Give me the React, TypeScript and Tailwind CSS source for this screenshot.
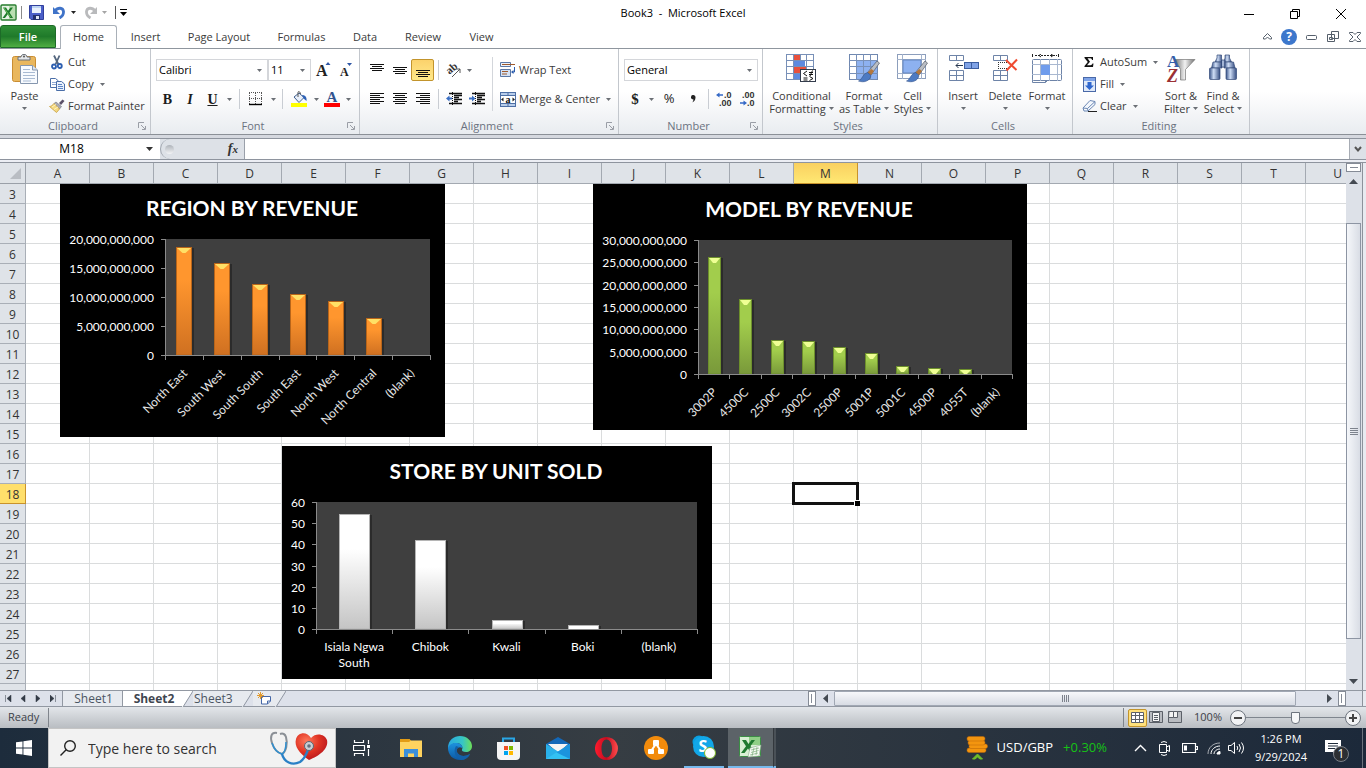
import React from "react";

type Kids = { children?: React.ReactNode };

const columns = "ABCDEFGHIJKLMNOPQRSTU".split("");
const lastFullRow = 27;
const rowNumbers = Array.from({ length: 26 }, (_, i) => i + 3);

/* ---------- small building blocks ---------- */

function Caret({ className = "text-[#6b6f75]" }: { className?: string }) {
  return (
    <svg width="5" height="3" viewBox="0 0 5 3" className={`shrink-0 ${className}`} aria-hidden="true">
      <path d="M0 0H5L2.5 3Z" fill="currentColor" />
    </svg>
  );
}

function Tool({ label, className, children }: Kids & { label: string; className: string }) {
  return (
    <button type="button" aria-label={label} className={`flex h-[22px] shrink-0 items-center justify-center ${className}`}>
      {children}
    </button>
  );
}

function Sep({ className }: { className: string }) {
  return (
    <div className={`flex shrink-0 justify-center ${className}`}>
      <div className="h-5 w-px bg-[#c9cdd3]" />
    </div>
  );
}

function Group({ title, width, launcher, children }: Kids & { title: string; width: string; launcher?: boolean }) {
  return (
    <section aria-label={title} className={`flex h-[85px] shrink-0 flex-col border-r border-[#c3c7cd] ${width}`}>
      <div className="flex h-[69px]">{children}</div>
      <div className="flex h-4 items-center pr-1">
        <span className="flex-1 pl-2 text-center text-[11px] leading-4 text-[#6b7280]">{title}</span>
        {launcher ? (
          <button type="button" aria-label={`${title} settings`}>
            <svg width="8" height="8" viewBox="0 0 8 8" fill="none" stroke="#9a9ea6">
              <path d="M0.5 6V0.5H6M3 3L7 7M7.5 4V7.5H4" />
            </svg>
          </button>
        ) : (
          <span className="w-2" />
        )}
      </div>
    </section>
  );
}

function BigButton({ icon, lines, width, caretBelow }: { icon: React.ReactNode; lines: string[]; width: string; caretBelow?: boolean }) {
  return (
    <button type="button" className={`flex h-[69px] shrink-0 flex-col items-center pt-[5px] ${width}`}>
      <span className="flex h-[35px] items-start justify-center">{icon}</span>
      {lines.map((line, i) => (
        <span key={line} className="flex h-[13px] items-center gap-[3px] text-[11px] leading-[13px] whitespace-nowrap">
          {line}
          {!caretBelow && i === lines.length - 1 && <Caret />}
        </span>
      ))}
      {caretBelow && (
        <span className="flex h-[13px] items-center">
          <Caret />
        </span>
      )}
    </button>
  );
}

function SmallButton({ icon, text, caret }: { icon: React.ReactNode; text: string; caret?: boolean }) {
  return (
    <button type="button" className="flex h-[22px] items-center gap-[3px] text-[11px] whitespace-nowrap">
      <span className="flex w-4 justify-center">{icon}</span>
      {text}
      {caret && (
        <span className="pl-[3px]">
          <Caret />
        </span>
      )}
    </button>
  );
}

function Picker({ label, value, width }: { label: string; value: string; width: string }) {
  return (
    <label className={`relative flex h-[22px] shrink-0 items-center border border-[#d4d6da] bg-white ${width}`}>
      <select aria-label={label} defaultValue={value} className="h-full w-full appearance-none pl-[2px] text-[11px] text-black outline-none">
        <option>{value}</option>
      </select>
      <Caret className="pointer-events-none absolute right-[5px] text-[#6b6f75]" />
    </label>
  );
}

/* ---------- icons ---------- */

function Lines({ y, rows }: { y: number; rows: number[][] }) {
  return (
    <svg width="16" height="16" viewBox="0 0 16 16" stroke="#111" aria-hidden="true">
      {rows.map(([a, b], i) => (
        <path key={i} d={`M${a} ${y + i * 2}.5H${b}`} />
      ))}
    </svg>
  );
}

function PageLines({ kind }: { kind: "left" | "center" | "right" }) {
  const short = { left: [1, 11], center: [3, 13], right: [5, 15] }[kind];
  return <Lines y={2} rows={[[1, 15], short, [1, 15], short, [1, 15], short]} />;
}

function Indent({ left }: { left?: boolean }) {
  return (
    <svg width="17" height="14" viewBox="0 0 17 14" aria-hidden="true">
      <path d="M3 1.5H16M8 3.5H16M8 5.5H13M8 7.5H16M8 9.5H12M3 11.5H16" stroke="#111" strokeWidth="1.3" />
      <path d="M6.5 0V13" stroke="#111" strokeDasharray="1 1" />
      <path d={left ? "M0 6.5L3.500 3.500V5.500H6V7.500H3.500V9.500Z" : "M6.500 6.500L3 3.500V5.500H0V7.500H3V9.500Z"} fill="#3a6fc4" />
    </svg>
  );
}

const ExcelLogo = () => (
  <svg width="17" height="17" viewBox="0 0 17 17" aria-hidden="true">
    <rect x="1" y="1" width="15" height="15" rx="1" fill="#e9f4e6" stroke="#267c2c" strokeWidth="1.400" />
    <path d="M9 2H15V15H9Z" fill="#b9dfb1" />
    <path d="M3 3.500H6L8 6.800L10.500 3.500H13L9.500 8.500L13 14H10L7.700 10.300L5 14H2.500L6.300 8.700Z" fill="#1e7b2c" />
    <path d="M4 4L10.500 13" stroke="#6cbc5c" />
  </svg>
);

const SaveIcon = () => (
  <svg width="15" height="15" viewBox="0 0 15 15" aria-hidden="true">
    <path d="M0.500 0.500H14.500V14.500H2L0.500 13Z" fill="#4a5fc8" stroke="#303f9c" />
    <rect x="3" y="1" width="9" height="7" fill="#e8f0fc" />
    <path d="M3 1H12V3H3Z" fill="#bcd3f2" />
    <rect x="4" y="10" width="7" height="5" fill="#22306e" />
    <rect x="7" y="11" width="3" height="3" fill="#dde4f5" />
  </svg>
);

function TurnArrow({ color, flip }: { color: string; flip?: boolean }) {
  return (
    <svg width="14" height="13" viewBox="0 0 14 13" aria-hidden="true">
      <g transform={flip ? "translate(14 0) scale(-1 1)" : undefined}>
        <path d="M3 5C6 1 11 1.500 11.500 5.500C11.700 8.500 10 10.500 7.500 12" fill="none" stroke={color} strokeWidth="2.800" />
        <path d="M1 1V8H8Z" fill={color} />
      </g>
    </svg>
  );
}

const PasteIcon = () => (
  <svg width="28" height="31" viewBox="0 0 28 31" aria-hidden="true">
    <rect x="1.500" y="2.500" width="23" height="25" rx="2" fill="#e9b75e" stroke="#c98d33" />
    <path d="M7 6V3H10C10-0.500 16-0.500 16 3H19V6Z" fill="#e4e7ea" stroke="#6b7178" />
    <circle cx="13" cy="2.500" r="1" fill="#555" />
    <path d="M9.500 11.500H21.500L26.500 16V29.500H9.500Z" fill="#f8fbff" stroke="#8596ae" />
    <path d="M21.500 11.500V16H26.500" fill="#dbe5f2" stroke="#8596ae" />
    <path d="M12 15.500H19M12 18.500H24M12 21.500H24M12 24.500H24M12 27H20" stroke="#a9bbd3" />
  </svg>
);

const CutIcon = () => (
  <svg width="12" height="15" viewBox="0 0 12 15" fill="none" aria-hidden="true">
    <path d="M3 0.500L7.500 9.500M8.500 0.500L4.500 9.500" stroke="#55677f" strokeWidth="1.800" />
    <circle cx="3" cy="11.500" r="2" stroke="#2d5fb0" strokeWidth="1.800" />
    <circle cx="8.800" cy="11" r="2" stroke="#2d5fb0" strokeWidth="1.800" />
  </svg>
);

const CopyIcon = () => (
  <svg width="15" height="13" viewBox="0 0 15 13" fill="#fff" stroke="#4a6ea8" aria-hidden="true">
    <path d="M0.500 0.500H5.500L8.500 3V9.500H0.500Z" />
    <path d="M2 4.500H6M2 6.500H6" stroke="#8fa9d4" />
    <path d="M6.500 3.500H11.500L14.500 6V12.500H6.500Z" fill="#eaf1fc" />
    <path d="M8 6.500H12M8 8.500H13M8 10.500H13" stroke="#5d85c6" />
  </svg>
);

const PainterIcon = () => (
  <svg width="16" height="14" viewBox="0 0 16 14" aria-hidden="true">
    <path d="M10 4L13.500 0.500L15.500 2L12 6Z" fill="#5b5068" />
    <path d="M7 3L12.500 7.500L10.500 10L5 4.500Z" fill="#a7a9b4" stroke="#70727d" strokeWidth="0.600" />
    <path d="M5 4.500L10.500 10L7.500 13.500L0.500 7.500C2 7.500 4 6 5 4.500Z" fill="#f4d982" stroke="#c79e3d" strokeWidth="0.800" />
    <path d="M3 8L7 5.500M5 10.500L9 8" stroke="#fff3bd" />
  </svg>
);

const BordersIcon = () => (
  <svg width="14" height="14" viewBox="0 0 14 14" stroke="#555" aria-hidden="true">
    <path d="M0.500 1V12M6.500 1V12M12.500 1V12M0 0.500H13M0 6.500H13" strokeDasharray="1 1" />
    <path d="M0 12.500H13" stroke="#000" strokeWidth="1.400" />
  </svg>
);

const FillColorIcon = () => (
  <svg width="17" height="17" viewBox="0 0 17 17" aria-hidden="true">
    <path d="M3 6L8 2L13 6.500L8 11.500Z" fill="#e8effa" stroke="#41608f" />
    <path d="M7 6V1.500C7 0 9 0 9.500 3" fill="none" stroke="#555" />
    <path d="M11 4C14 4 16 6 15.500 10L12.500 7.500Z" fill="#2e62b6" />
    <rect x="0" y="12" width="16" height="4" fill="#ffff00" />
  </svg>
);

const OrientationIcon = () => (
  <svg width="16" height="16" viewBox="0 0 16 16" className="overflow-visible" aria-hidden="true">
    <text x="1" y="10" transform="rotate(-42 6 8)" fontSize="11" fontWeight="bold" fontFamily="Liberation Serif" fill="#333">ab</text>
    <path d="M6 15L14 7M14 11V7H10" fill="none" stroke="#555" />
  </svg>
);

const WrapIcon = () => (
  <svg width="16" height="16" viewBox="0 0 16 16" fill="none" aria-hidden="true">
    <path d="M0.500 0.500H10.500V4.500H0.500Z" fill="#edf3fb" stroke="#5b78a6" />
    <path d="M2 2.500H15" stroke="#a05a2c" />
    <path d="M0.500 7.500H10.500V14.500H0.500Z" fill="#d5e2f4" stroke="#5b78a6" />
    <path d="M2 9.500H8M2 12H7" stroke="#a05a2c" />
    <path d="M14.500 5V10H12" stroke="#2a5cae" />
    <path d="M11 10L13.500 8V12Z" fill="#2a5cae" />
  </svg>
);

const MergeIcon = () => (
  <svg width="16" height="15" viewBox="0 0 16 15" aria-hidden="true">
    <rect x="0.500" y="0.500" width="15" height="14" fill="#b8cdea" stroke="#4d6fa5" />
    <path d="M0 3.500H16M0 11.500H16M8 0V4M8 11V15" stroke="#4d6fa5" />
    <rect x="1" y="4" width="14" height="7" fill="#fff" />
    <path d="M1 7.500L3.500 5.500V9.500ZM15 7.500L12.500 5.500V9.500Z" fill="#222" />
    <text x="5.500" y="10.500" fontSize="10" fontWeight="bold" fontFamily="Liberation Serif" fill="#111">a</text>
  </svg>
);

function DecimalIcon({ more }: { more?: boolean }) {
  return (
    <svg width="17" height="15" viewBox="0 0 17 15" fontSize="9" fontWeight="bold" fontFamily="Liberation Sans" fill="#333" className="overflow-visible" aria-hidden="true">
      <text x={more ? 8 : 3} y="6">{more ? ".0" : ".00"}</text>
      <text x={more ? 3 : 8} y="14">{more ? ".00" : ".0"}</text>
      <path d={more ? "M0 3L3.500 0.500V2.200H7V3.800H3.500V5.500Z" : "M8 11L4.500 8.500V10.200H1V11.800H4.500V13.500Z"} fill="#3468c6" />
    </svg>
  );
}

const ConditionalIcon = () => (
  <svg width="31" height="29" viewBox="0 0 31 29" aria-hidden="true">
    <rect x="0.500" y="0.500" width="27" height="25" fill="#fff" stroke="#7890b8" />
    <rect x="8" y="1" width="6" height="6" fill="#e8503c" />
    <rect x="8" y="7" width="11" height="6" fill="#5e8ae0" />
    <rect x="8" y="13" width="12" height="6" fill="#e8503c" />
    <rect x="8" y="19" width="7" height="6" fill="#5e8ae0" />
    <path d="M0 6.500H28M0 12.500H28M0 19.500H28M7.500 0V26M14.500 0V7M20.500 0V26" stroke="#7890b8" />
    <rect x="14.500" y="15.500" width="15" height="12" fill="#fff" stroke="#333c4c" />
    <path d="M21 17L17.500 19.500L21 22M17.500 24H21.500M17.500 26H21.500M23 18.500H27M23 20.500H27M26.500 16.500L24 22M23.500 22.500L27 24.500L23.500 26.500" stroke="#111" fill="none" />
  </svg>
);

function Brush() {
  return (
    <g>
      <path d="M28 7L30.500 9L22 21L18.500 18.500Z" fill="#b9bdc4" stroke="#555b66" strokeWidth="0.700" />
      <path d="M22.500 15L25 17L22 21L18.500 18.500Z" fill="#b3763c" />
      <path d="M18.500 18.500L22 21.500C21 27 15 29 9.500 27C13 26 13.500 20 18.500 18.500Z" fill="#4d7ac2" stroke="#33538b" strokeWidth="0.600" />
    </g>
  );
}

const FormatTableIcon = () => (
  <svg width="31" height="29" viewBox="0 0 31 29" aria-hidden="true">
    <rect x="0.500" y="0.500" width="28" height="25" fill="#fff" stroke="#7088b0" />
    <rect x="7" y="7" width="21" height="18" fill="#8db1f0" />
    <path d="M0 6.500H29M0 12.500H29M0 19.500H29M7.500 0V26M14.500 0V26M21.500 0V26" stroke="#7890b8" />
    <Brush />
  </svg>
);

const CellStylesIcon = () => (
  <svg width="31" height="29" viewBox="0 0 31 29" aria-hidden="true">
    <rect x="0.500" y="0.500" width="28" height="24" fill="#fff" stroke="#8c9ebc" />
    <path d="M0 5.500H29M0 19.500H29M5.500 0V25M24.500 0V25" stroke="#a3b2cb" />
    <rect x="6" y="6" width="18" height="13" fill="#8db1f0" stroke="#6585bd" />
    <Brush />
  </svg>
);

const InsertIcon = () => (
  <svg width="31" height="28" viewBox="0 0 31 28" fill="#fff" stroke="#6e84a8" aria-hidden="true">
    <path d="M1.500 1.500H15.500V6.500H1.500ZM8.500 1.500V6.500M1.500 16.500H15.500V26.500H1.500ZM8.500 16.500V26.500M1.500 21.500H15.500" />
    <rect x="16.500" y="8.500" width="14" height="6" fill="#7fa2e6" stroke="#3a5da0" />
    <path d="M23.500 8V15" stroke="#3a5da0" />
    <path d="M8 11.500H15M10.500 9L8 11.500L10.500 14" fill="none" stroke="#26364f" />
  </svg>
);

const DeleteIcon = () => (
  <svg width="27" height="28" viewBox="0 0 27 28" fill="#fff" stroke="#6e84a8" aria-hidden="true">
    <path d="M1.500 1.500H15.500V6.500H1.500ZM8.500 1.500V6.500M1.500 16.500H15.500V26.500H1.500ZM8.500 16.500V26.500M1.500 21.500H15.500" />
    <path d="M6.500 8V14M6 8.500H16M6 14.500H16" stroke="#333" strokeDasharray="1 1" />
    <path d="M14 6L24.500 16M25 5.500L14.500 16.500" stroke="#ef4a30" strokeWidth="2" />
  </svg>
);

const FormatIcon = () => (
  <svg width="32" height="30" viewBox="0 0 32 30" fill="#fff" stroke="#6e84a8" aria-hidden="true">
    <path d="M4 1.500H26" stroke="#222" strokeDasharray="2 1" />
    <path d="M1.500 0V3M27.500 0V3M10 0L8 1.500L10 3M20 0L22 1.500L20 3" stroke="#222" fill="none" />
    <path d="M1.500 25V28.500H14.500V25M14.500 28.500L17 26" />
    <rect x="1.500" y="5.500" width="29" height="21" rx="1" />
    <path d="M1 10.500H31M1 20.500H31M9.500 5V27M18.500 5V27M26.500 5V27" stroke="#a9b8d0" />
    <rect x="10" y="11" width="9" height="10" fill="#6f9cec" stroke="none" />
  </svg>
);

const SortIcon = () => (
  <svg width="30" height="30" viewBox="0 0 30 30" fontFamily="Liberation Serif" fontWeight="bold" className="overflow-visible" aria-hidden="true">
    <defs>
      <linearGradient id="funnel">
        <stop offset="0" stopColor="#747474" />
        <stop offset="0.500" stopColor="#f2f2f2" />
        <stop offset="1" stopColor="#6e6e6e" />
      </linearGradient>
    </defs>
    <path d="M9 5.500H29L19.500 15.500V26H14.500V15.500Z" fill="url(#funnel)" stroke="#777" strokeWidth="0.700" />
    <text x="1" y="13" fontSize="17" fill="#355ea9">A</text>
    <text x="1" y="28" fontSize="18" fontStyle="italic" fill="#9b3034">Z</text>
  </svg>
);

const FindIcon = () => (
  <svg width="28" height="27" viewBox="0 0 28 27" aria-hidden="true">
    <defs>
      <linearGradient id="lens">
        <stop offset="0" stopColor="#3a5488" />
        <stop offset="0.400" stopColor="#cfdef6" />
        <stop offset="1" stopColor="#344c80" />
      </linearGradient>
    </defs>
    <g fill="url(#lens)" stroke="#334a7a" strokeWidth="0.700">
      <path d="M8 4V1H12.500V4L13 8H6Z" />
      <path d="M16 4V1H20.500V4L22.500 8H15Z" />
      <path d="M4 8H13V14H2.500Z" />
      <path d="M15 8H24.500L26 14H15Z" />
      <path d="M12.500 6H16V13H12.500Z" />
      <rect x="0.500" y="14" width="10.500" height="11.500" rx="1" />
      <rect x="17" y="14" width="10.500" height="11.500" rx="1" />
    </g>
  </svg>
);

const FillIcon = () => (
  <svg width="13" height="15" viewBox="0 0 13 15" aria-hidden="true">
    <rect x="0.500" y="0.500" width="12" height="14" fill="#dfe9f9" stroke="#4a69a8" />
    <path d="M1 1H12V4H1Z" fill="#7ea3e8" />
    <path d="M4.500 5H8.500V8.500H11L6.500 13L2 8.500H4.500Z" fill="#2f67cf" />
  </svg>
);

const ClearIcon = () => (
  <svg width="15" height="12" viewBox="0 0 15 12" aria-hidden="true">
    <path d="M8 0.500L13 1.500V4.500L6 11H2L1 8Z" fill="#f3f7fc" stroke="#6b87b4" />
    <path d="M1 8L5.500 8.500L13 1.500M5.500 8.500L6 11" fill="none" stroke="#6b87b4" />
    <path d="M6 11.500H15" stroke="#222" />
  </svg>
);

/* ---------- title bar, tabs, ribbon ---------- */

function TitleBar() {
  return (
    <div className="grid h-6 grid-cols-[1fr_auto_1fr] items-center bg-white">
      <div className="flex items-center">
        <ExcelLogo />
        <div className="ml-1 h-[13px] w-px bg-[#8a8a8a]" />
        <button type="button" aria-label="Save" className="ml-[7px]"><SaveIcon /></button>
        <button type="button" aria-label="Undo" className="ml-2"><TurnArrow color="#3f73c8" /></button>
        <button type="button" aria-label="Undo history" className="ml-[5px]"><Caret className="text-[#222]" /></button>
        <button type="button" aria-label="Redo" className="ml-2"><TurnArrow color="#b9babc" flip /></button>
        <button type="button" aria-label="Redo history" className="ml-1"><Caret className="text-[#a5a5a5]" /></button>
        <div className="ml-2 h-[13px] w-px bg-[#555]" />
        <button type="button" aria-label="Customize toolbar" className="ml-1 flex flex-col items-center gap-[2px]">
          <span className="h-px w-[7px] bg-black" />
          <svg width="7" height="4" viewBox="0 0 7 4"><path d="M0 0H7L3.500 4Z" /></svg>
        </button>
      </div>
      <h1 className="pt-[2px] text-[11px] whitespace-pre text-black">Book3  -  Microsoft Excel</h1>
      <div className="flex justify-end pt-1 pr-[2px]">
        <button type="button" aria-label="Minimize" className="flex w-[46px] justify-center">
          <svg width="10" height="10" stroke="#000"><path d="M0 5.500H10" /></svg>
        </button>
        <button type="button" aria-label="Restore" className="flex w-[46px] justify-center">
          <svg width="10" height="10" stroke="#000" fill="none"><path d="M0.500 2.500H7.500V9.500H0.500ZM2.500 2.500V0.500H9.500V7.500H7.500" /></svg>
        </button>
        <button type="button" aria-label="Close" className="flex w-[46px] justify-center">
          <svg width="10" height="10" stroke="#000"><path d="M0 0L10 10M10 0L0 10" /></svg>
        </button>
      </div>
    </div>
  );
}

function RibbonTabs() {
  const tabs: [string, string][] = [
    ["Insert", "w-[57px]"],
    ["Page Layout", "w-[90px]"],
    ["Formulas", "w-[75px]"],
    ["Data", "w-[52px]"],
    ["Review", "w-16"],
    ["View", "w-[53px]"],
  ];
  return (
    <nav className="flex h-[25px] items-stretch border-b border-[#8f969e] pt-px text-[11px]">
      <button type="button" className="w-14 rounded-t-[3px] border border-[#1d6b28] bg-linear-to-b from-[#2f8f37] via-[#1f7a2a] to-[#4fae43] pt-px font-semibold text-white">File</button>
      <button type="button" className="-mb-px ml-1 w-[57px] rounded-t-[3px] border border-b-0 border-[#a9b0b8] bg-white">Home</button>
      {tabs.map(([name, width]) => (
        <button type="button" key={name} className={`pt-[2px] ${width}`}>{name}</button>
      ))}
      <div className="ml-auto flex items-center">
        <button type="button" aria-label="Collapse ribbon" className="flex w-[22px] justify-center">
          <svg width="9" height="7" fill="none" stroke="#555f6b"><path d="M0.500 4.500L4.500 0.500L8.500 4.500V6H6.500L4.500 4L2.500 6H0.500Z" /></svg>
        </button>
        <button type="button" aria-label="Help" className="flex w-[22px] justify-center">
          <span className="flex size-4 items-center justify-center rounded-full bg-[#3c77cc] text-[12px] font-bold text-white">?</span>
        </button>
        <button type="button" aria-label="Minimize workbook" className="flex w-[22px] justify-center">
          <svg width="11" height="9" fill="#fff" stroke="#555f6b"><rect x="0.500" y="3.500" width="10" height="4" rx="1" /></svg>
        </button>
        <button type="button" aria-label="Restore workbook" className="flex w-[22px] justify-center">
          <svg width="12" height="11" fill="#fff" stroke="#555f6b"><path d="M4.500 0.500H11.500V7.500H4.500ZM0.500 3.500H7.500V10.500H0.500ZM2.500 6.500H5.500V8.500H2.500Z" /></svg>
        </button>
        <button type="button" aria-label="Close workbook" className="flex w-[22px] justify-center">
          <svg width="12" height="10" fill="none" stroke="#555f6b"><path d="M0.500 0.500H4L6 2.500L8 0.500H11.500V1.500L8 5L11.500 8.500V9.500H8L6 7.500L4 9.500H0.500V8.500L4 5L0.500 1.500Z" /></svg>
        </button>
      </div>
    </nav>
  );
}

function Ribbon() {
  return (
    <div className="flex h-[86px] overflow-hidden border-b border-[#8b9097] bg-linear-to-b from-white from-50% to-[#e9ecf0]">
      <Group title="Clipboard" width="w-[151px]" launcher>
        <BigButton icon={<PasteIcon />} lines={["Paste"]} width="w-[49px]" caretBelow />
        <div className="flex flex-col pt-[2px]">
          <SmallButton icon={<CutIcon />} text="Cut" />
          <SmallButton icon={<CopyIcon />} text="Copy" caret />
          <SmallButton icon={<PainterIcon />} text="Format Painter" />
        </div>
      </Group>

      <Group title="Font" width="w-[209px]" launcher>
        <div className="flex flex-col gap-[7px] pt-[10px] pl-[5px]">
          <div className="flex">
            <Picker label="Font" value="Calibri" width="w-[112px]" />
            <Picker label="Font size" value="11" width="w-[43px]" />
            <Tool label="Grow font" className="w-[25px]">
              <svg width="15" height="16" viewBox="0 0 15 16" fontFamily="Liberation Serif" fontWeight="bold" className="overflow-visible">
                <text x="0" y="14" fontSize="16" fill="#222">A</text><path d="M9.500 3H14.500L12 0Z" fill="#2e56a5" />
              </svg>
            </Tool>
            <Tool label="Shrink font" className="w-[20px]">
              <svg width="14" height="16" viewBox="0 0 14 16" fontFamily="Liberation Serif" fontWeight="bold" className="overflow-visible">
                <text x="1" y="14" fontSize="12" fill="#222">A</text><path d="M8 1H13L10.500 4Z" fill="#2e56a5" />
              </svg>
            </Tool>
          </div>
          <div className="flex items-center font-['Liberation_Serif',serif] text-[14px] font-bold text-[#1c1c1c]">
            <Tool label="Bold" className="w-[23px]">B</Tool>
            <Tool label="Italic" className="w-[22px] italic">I</Tool>
            <Tool label="Underline" className="w-[23px] underline">U</Tool>
            <Tool label="Underline style" className="w-[11px]"><Caret /></Tool>
            <Sep className="w-[9px]" />
            <Tool label="Borders" className="w-6"><BordersIcon /></Tool>
            <Tool label="Border style" className="w-[10px]"><Caret /></Tool>
            <Sep className="w-[9px]" />
            <Tool label="Fill color" className="w-6"><FillColorIcon /></Tool>
            <Tool label="Fill palette" className="w-[10px]"><Caret /></Tool>
            <Tool label="Font color" className="w-[22px]">
              <svg width="16" height="17" viewBox="0 0 16 17" className="overflow-visible"><text x="2.500" y="11" fontSize="15" fill="#31538f">A</text><rect y="12" width="16" height="4" fill="#fe0000" /></svg>
            </Tool>
            <Tool label="Font palette" className="w-[10px]"><Caret /></Tool>
          </div>
        </div>
      </Group>

      <Group title="Alignment" width="w-[259px]" launcher>
        <div className="flex w-[132px] flex-col gap-[7px] pt-[10px] pl-[5px]">
          <div className="flex items-center">
            <Tool label="Top align" className="w-[23px]"><Lines y={2} rows={[[1, 15], [3, 13], [1, 15], [3, 13]]} /></Tool>
            <Tool label="Middle align" className="w-[23px]"><Lines y={5} rows={[[1, 15], [3, 13], [1, 15], [3, 13]]} /></Tool>
            <Tool label="Bottom align" className="w-[23px] rounded-[2px] border border-[#c2942c] bg-linear-to-b from-[#fbd26c] to-[#ffe98a]"><Lines y={8} rows={[[1, 15], [3, 13], [1, 15], [3, 13]]} /></Tool>
            <Sep className="w-2" />
            <Tool label="Orientation" className="w-[23px]"><OrientationIcon /></Tool>
            <Tool label="Orientation options" className="w-[9px]"><Caret /></Tool>
          </div>
          <div className="flex items-center">
            <Tool label="Align left" className="w-[23px]"><PageLines kind="left" /></Tool>
            <Tool label="Align center" className="w-[23px]"><PageLines kind="center" /></Tool>
            <Tool label="Align right" className="w-[23px]"><PageLines kind="right" /></Tool>
            <Sep className="w-2" />
            <Tool label="Decrease indent" className="w-6"><Indent left /></Tool>
            <Tool label="Increase indent" className="w-[22px]"><Indent /></Tool>
          </div>
        </div>
        <div className="mt-2 h-[54px] w-px bg-[#d3d6db]" />
        <div className="flex flex-col gap-[7px] pt-[10px] pl-[7px]">
          <SmallButton icon={<WrapIcon />} text="Wrap Text" />
          <SmallButton icon={<MergeIcon />} text="Merge & Center" caret />
        </div>
      </Group>

      <Group title="Number" width="w-[144px]" launcher>
        <div className="flex flex-col gap-[7px] pt-[10px] pl-[5px]">
          <Picker label="Number format" value="General" width="w-[134px]" />
          <div className="flex items-center">
            <Tool label="Currency" className="w-[22px] font-['Liberation_Serif',serif] text-[15px] font-bold text-[#222]">$</Tool>
            <Tool label="Currency options" className="w-[10px]"><Caret /></Tool>
            <Tool label="Percent" className="w-[26px] text-[13px] text-[#222]">%</Tool>
            <Tool label="Comma style" className="w-[22px]">
              <svg width="5" height="8" viewBox="0 0 5 8"><path d="M0 2A2 2 0 0 1 4.500 2.500C4.500 5 3 7 1 7.500C2 6.500 2.500 5 2.300 4.300A2 2 0 0 1 0 2Z" fill="#222" /></svg>
            </Tool>
            <Sep className="w-[9px]" />
            <Tool label="Increase decimal" className="w-[23px]"><DecimalIcon more /></Tool>
            <Tool label="Decrease decimal" className="w-[22px]"><DecimalIcon /></Tool>
          </div>
        </div>
      </Group>

      <Group title="Styles" width="w-[175px]">
        <div className="flex pl-[2px]">
          <BigButton icon={<ConditionalIcon />} lines={["Conditional", "Formatting"]} width="w-[73px]" />
          <BigButton icon={<FormatTableIcon />} lines={["Format", "as Table"]} width="w-[52px]" />
          <BigButton icon={<CellStylesIcon />} lines={["Cell", "Styles"]} width="w-[45px]" />
        </div>
      </Group>

      <Group title="Cells" width="w-[135px]">
        <div className="flex pl-1">
          <BigButton icon={<InsertIcon />} lines={["Insert"]} width="w-[42px]" caretBelow />
          <BigButton icon={<DeleteIcon />} lines={["Delete"]} width="w-[42px]" caretBelow />
          <BigButton icon={<FormatIcon />} lines={["Format"]} width="w-[42px]" caretBelow />
        </div>
      </Group>

      <Group title="Editing" width="w-[177px]">
        <div className="flex w-[87px] flex-col pt-[2px] pl-2">
          <SmallButton
            icon={<svg width="10" height="10" viewBox="0 0 10 10"><path d="M0.500 0H9V3H8C8 1.500 7 1.200 3.500 1.200L6 4.700L3 8.300C7 8.300 8 8.200 8.500 6.500H9.500L9 10H0.500V9L3.800 5L0.500 1Z" fill="#111" /></svg>}
            text="AutoSum"
            caret
          />
          <SmallButton icon={<FillIcon />} text="Fill" caret />
          <SmallButton icon={<ClearIcon />} text="Clear" caret />
        </div>
        <BigButton icon={<SortIcon />} lines={["Sort &", "Filter"]} width="w-[42px]" />
        <BigButton icon={<FindIcon />} lines={["Find &", "Select"]} width="w-[42px]" />
      </Group>
    </div>
  );
}

function FormulaBar() {
  return (
    <div className="flex h-[22px] shrink-0 border-y border-[#8e949e] bg-[#dde1e7]">
      <div className="flex w-40 items-center bg-white pr-1">
        <input aria-label="Name box" defaultValue="M18" className="w-[143px] bg-transparent text-center text-[12px] text-black outline-none" />
        <button type="button" aria-label="Named ranges" className="flex flex-1 justify-center">
          <svg width="7" height="4" viewBox="0 0 7 4"><path d="M0 0H7L3.500 4Z" fill="#333" /></svg>
        </button>
      </div>
      <div className="flex w-[84px] items-center justify-between rounded-l-full border-l border-[#9fa5ae] bg-[#dde1e7] pr-[6px] pl-1">
        <span className="size-[9px] rounded-full bg-linear-to-b from-[#aeb3ba] to-[#f3f4f6]" />
        <button type="button" aria-label="Insert function" className="font-['Liberation_Serif',serif] text-[14px] leading-5 font-bold text-[#333] italic">
          f<span className="text-[11px]">x</span>
        </button>
      </div>
      <input aria-label="Formula" className="min-w-0 flex-1 border-l border-[#9aa0aa] bg-white px-2 outline-none" />
      <button type="button" aria-label="Expand formula bar" className="flex w-[17px] items-center justify-center border-l border-[#a7acb4]">
        <svg width="8" height="7" fill="none" stroke="#555" strokeWidth="2"><path d="M1 1L4 4.500L7 1" /></svg>
      </button>
    </div>
  );
}

/* ---------- charts ---------- */

type ChartProps = {
  id: string;
  title: string;
  titleX: number;
  titleY: number;
  width: number;
  height: number;
  plot: { x: number; y: number; w: number; h: number };
  ticks: string[];
  tickX: number;
  bars: { label: string[]; h: number }[];
  barWidth: number;
  colors: [string, string, string, string];
  slanted?: boolean;
};

function Chart({ id, title, titleX, titleY, width, height, plot, ticks, tickX, bars, barWidth, colors, slanted }: ChartProps) {
  const step = plot.w / bars.length;
  const base = plot.y + plot.h;
  const [edge, top, bottom, shine] = colors;
  return (
    <svg width={width} height={height} viewBox={`0 0 ${width} ${height}`} role="img" aria-label={title} fontFamily="Lato, sans-serif" fontSize="12" fill="#fff" className="block">
      <defs>
        <linearGradient id={`${id}-body`} x2="0" y2="1">
          <stop offset="0" stopColor={top} />
          <stop offset="0.300" stopColor={top} />
          <stop offset="1" stopColor={bottom} />
        </linearGradient>
      </defs>
      <rect width={width} height={height} fill="#000" />
      <text x={titleX} y={titleY} textAnchor="middle" fontSize="21" fontWeight="bold">{title}</text>
      <rect x={plot.x} y={plot.y} width={plot.w} height={plot.h} fill="#3f3f3f" />
      {ticks.map((t, i) => {
        const y = plot.y + (plot.h * i) / (ticks.length - 1);
        return (
          <g key={t}>
            <text x={tickX} y={y + 5} textAnchor="end">{t}</text>
            <path d={`M${plot.x - 4} ${Math.round(y) + 0.5}H${plot.x}`} stroke="#8b8b8b" />
          </g>
        );
      })}
      {bars.map((b, i) => {
        const x = Math.round(plot.x + 0.5 + step * (i + 0.5) - barWidth / 2);
        const y = base - b.h;
        const cx = plot.x + step * (i + 0.5);
        return (
          <g key={b.label.join(" ")}>
            {b.h > 0 && (
              <>
                <rect x={x + 1} y={y + 1} width={barWidth + 1} height={b.h - 1} fill="#2b2b2b" />
                <rect x={x + 0.5} y={y + 0.5} width={barWidth - 1} height={b.h - 0.5} fill={`url(#${id}-body)`} stroke={edge} />
                {slanted ? (
                  <path d={`M${x + 1} ${y + 1}H${x + barWidth - 1}L${x + barWidth / 2 + 1.5} ${y + Math.min(6, b.h)}H${x + barWidth / 2 - 1.5}Z`} fill={shine} />
                ) : (
                  <rect x={x + 1} y={y + 1} width={barWidth - 2} height={Math.min(3, b.h - 1)} fill={shine} />
                )}
              </>
            )}
            {slanted ? (
              <text x={cx + 4} y={base + 19} textAnchor="end" fill="#e6e6e6" transform={`rotate(-45 ${cx + 4} ${base + 19})`}>{b.label[0]}</text>
            ) : (
              b.label.map((line, k) => (
                <text key={line} x={cx} y={base + 22 + k * 16} textAnchor="middle">{line}</text>
              ))
            )}
          </g>
        );
      })}
      <path d={`M${plot.x + 0.5} ${plot.y}V${base + 0.5}H${plot.x + plot.w}`} fill="none" stroke="#8b8b8b" />
      {Array.from({ length: bars.length + 1 }, (_, i) => (
        <path key={i} d={`M${Math.round(plot.x + step * i) + 0.5} ${base}V${base + 5}`} stroke="#8b8b8b" />
      ))}
    </svg>
  );
}

const orange: [string, string, string, string] = ["#b8651a", "#ff962e", "#cf7021", "#ffe066"];
const green: [string, string, string, string] = ["#6d8f2c", "#a2cd4c", "#79993a", "#efff94"];
const white: [string, string, string, string] = ["#b5b5b5", "#ffffff", "#c4c4c4", "#ffffff"];

const one = (pairs: [string, number][]) => pairs.map(([l, h]) => ({ label: l.split("|"), h }));

/* ---------- worksheet ---------- */

function Sheet() {
  return (
    <div className="relative min-h-0 flex-1 overflow-hidden bg-white">
      <table className="w-[1370px] table-fixed border-separate border-spacing-0 text-[#333]">
        <thead>
          <tr className="h-[21px] bg-[#dfe3e8]">
            <th className="w-[26px] border-r border-b border-[#9aa0a8] p-0">
              <svg width="12" height="12" className="ml-auto mr-1"><path d="M12 1V12H1Z" fill="#b9bdc3" /></svg>
            </th>
            {columns.map((c) => (
              <th
                key={c}
                className={
                  c === "M"
                    ? "w-16 border-r border-b border-[#c8922c] bg-linear-to-b from-[#f9d060] to-[#ffe873] p-0 pt-[2px] text-[12px] leading-[18px] font-normal"
                    : "w-16 border-r border-b border-[#a3a9b1] p-0 pt-[2px] text-[12px] leading-[18px] font-normal"
                }
              >
                {c}
              </th>
            ))}
          </tr>
        </thead>
        <tbody>
          {rowNumbers.map((n) => (
            <tr key={n} className="h-5">
              <th
                className={
                  n === 18
                    ? "border-r border-b border-[#c8922c] bg-[#ffdf6b] p-0 pt-[2px] text-[12px] leading-[17px] font-normal"
                    : "border-r border-b border-[#a9afb7] bg-[#dfe3e8] p-0 pt-[2px] text-[12px] leading-[17px] font-normal"
                }
              >
                {n <= lastFullRow ? n : null}
              </th>
              {columns.map((c) => (
                <td key={c} className="relative border-r border-b border-[#dadcdd] p-0">
                  {c === "M" && n === 18 && (
                    <div className="absolute -top-[2px] -left-[2px] z-10 h-[23px] w-[67px] border-[3px] border-[#111]">
                      <span className="absolute -right-1 -bottom-1 size-[6px] border-t border-l border-white bg-black" />
                    </div>
                  )}
                </td>
              ))}
            </tr>
          ))}
        </tbody>
      </table>
      <div className="absolute top-[21px] left-[60px]">
        <Chart
          id="region" title="REGION BY REVENUE" titleX={192} titleY={32} width={385} height={253}
          plot={{ x: 105, y: 55, w: 265, h: 116 }} tickX={94}
          ticks={["20,000,000,000", "15,000,000,000", "10,000,000,000", "5,000,000,000", "0"]}
          bars={one([["North East", 108], ["South West", 92], ["South South", 71], ["South East", 61], ["North West", 54], ["North Central", 37], ["(blank)", 0]])}
          barWidth={16} colors={orange} slanted
        />
      </div>
      <div className="absolute top-[21px] left-[593px]">
        <Chart
          id="model" title="MODEL BY REVENUE" titleX={216} titleY={33} width={434} height={246}
          plot={{ x: 105, y: 56, w: 314, h: 134 }} tickX={94}
          ticks={["30,000,000,000", "25,000,000,000", "20,000,000,000", "15,000,000,000", "10,000,000,000", "5,000,000,000", "0"]}
          bars={one([["3002P", 117], ["4500C", 75], ["2500C", 34], ["3002C", 33], ["2500P", 27], ["5001P", 21], ["5001C", 8], ["4500P", 6], ["4055T", 5], ["(blank)", 0]])}
          barWidth={13} colors={green} slanted
        />
      </div>
      <div className="absolute top-[283px] left-[282px]">
        <Chart
          id="store" title="STORE BY UNIT SOLD" titleX={214} titleY={33} width={430} height={233}
          plot={{ x: 34, y: 56, w: 381, h: 127 }} tickX={23}
          ticks={["60", "50", "40", "30", "20", "10", "0"]}
          bars={one([["Isiala Ngwa|South", 115], ["Chibok", 89], ["Kwali", 9], ["Boki", 4], ["(blank)", 0]])}
          barWidth={31} colors={white}
        />
      </div>
    </div>
  );
}

function VerticalScroll() {
  return (
    <div className="flex w-5 shrink-0 flex-col border-r-[3px] border-[#e8eaf0] bg-[#dde1e8]">
      <div className="flex min-h-0 flex-1 flex-col border-r border-[#8d929b]">
        <div className="flex h-[9px] w-[15px] items-center justify-center border border-[#858b96] bg-white">
          <span className="h-px w-2 bg-[#858b96]" />
        </div>
        <button type="button" aria-label="Scroll up" className="flex h-[51px] w-[15px] justify-center pt-[7px]">
          <svg width="9" height="5"><path d="M0 5H9L4.500 0Z" fill="#444a52" /></svg>
        </button>
        <div className="flex w-[15px] flex-[417] flex-col items-center justify-center gap-px border border-[#8d95a3] bg-linear-to-r from-[#f5f7fa] to-[#d9dde5]">
          {[0, 1, 2, 3].map((i) => <span key={i} className="h-px w-2 bg-[#7d838d]" />)}
        </div>
        <button type="button" aria-label="Scroll down" className="flex h-[51px] w-[15px] items-end justify-center pb-[6px]">
          <svg width="9" height="5"><path d="M0 0H9L4.500 5Z" fill="#444a52" /></svg>
        </button>
      </div>
    </div>
  );
}

function Slant({ fill }: { fill: string }) {
  return (
    <svg width="11" height="16" viewBox="0 0 11 16" className="shrink-0" aria-hidden="true">
      <path d="M0 0H11L1 16H0Z" fill={fill} />
      <path d="M11 0L1 16" stroke="#8f96a2" fill="none" />
    </svg>
  );
}

function SheetTabs() {
  const nav = [
    ["First sheet", "M0.500 0V7M6 0L2 3.500L6 7Z"],
    ["Previous sheet", "M5 0L1 3.500L5 7Z"],
    ["Next sheet", "M1 0L5 3.500L1 7Z"],
    ["Last sheet", "M0 0L4 3.500L0 7ZM5.500 0V7"],
  ];
  return (
    <div className="flex h-[17px] shrink-0 border-y border-[#9298a2] bg-[#dde1ea] text-[12px] leading-[15px] text-[#4b5563]">
      <div className="flex w-[62px] items-center pl-px">
        {nav.map(([label, d]) => (
          <button key={label} type="button" aria-label={label} className="flex w-[15px] justify-center">
            <svg width="7" height="7" fill="#333b46" stroke="#333b46" strokeWidth="0.500"><path d={d} /></svg>
          </button>
        ))}
      </div>
      <button type="button" className="w-[61px] border-x border-[#9298a2] bg-[#e7eaef] pl-[2px]">Sheet1</button>
      <button type="button" className="w-[59px] bg-white pl-[3px] font-bold text-[#3f4650]">Sheet2</button>
      <Slant fill="#fff" />
      <button type="button" className="w-[49px] bg-[#e7eaef] pl-px text-left">Sheet3</button>
      <Slant fill="#e7eaef" />
      <button type="button" aria-label="Insert worksheet" className="flex w-[22px] items-center justify-center bg-[#e7eaef]">
        <svg width="15" height="13" viewBox="0 0 15 13"><path d="M4.500 4.500H13.500V9L10.500 12H4.500Z" fill="#fff" stroke="#4668a8" /><path d="M10.500 12V9H13.500" fill="none" stroke="#4668a8" /><path d="M3.500 0V7M0 3.500H7M1 1L6 6M6 1L1 6" stroke="#e39a2c" /></svg>
      </button>
      <Slant fill="#e7eaef" />
      <div className="ml-auto flex w-[558px]">
        <div className="w-2 border border-[#858b96] bg-white p-[2px]"><div className="h-full w-px bg-[#858b96]" /></div>
        <button type="button" aria-label="Scroll left" className="flex w-[18px] items-center justify-center">
          <svg width="5" height="9"><path d="M5 0V9L0 4.500Z" fill="#444a52" /></svg>
        </button>
        <div className="flex flex-1 items-center justify-center gap-px rounded-[1px] border border-[#a0a7b3] bg-linear-to-b from-[#f7f8fb] to-[#d8dce4]">
          {[0, 1, 2, 3].map((i) => <span key={i} className="h-[7px] w-px bg-[#7d838d]" />)}
        </div>
        <button type="button" aria-label="Scroll right" className="flex w-[42px] items-center justify-end pr-[6px]">
          <svg width="5" height="9"><path d="M0 0V9L5 4.500Z" fill="#444a52" /></svg>
        </button>
        <div className="w-2 border border-[#858b96] bg-white p-[2px]"><div className="h-full w-px bg-[#858b96]" /></div>
        <div className="w-5 border-r-[3px] border-[#e8eaf0]"><div className="h-full border-r border-[#8d929b]" /></div>
      </div>
    </div>
  );
}

function ZoomButton({ plus }: { plus?: boolean }) {
  return (
    <button type="button" aria-label={plus ? "Zoom in" : "Zoom out"} className="flex size-4 shrink-0 items-center justify-center rounded-full border border-[#6d747e] bg-[#f1f2f4]">
      <svg width="8" height="8" stroke="#444" strokeWidth="2"><path d={plus ? "M0 4H8M4 0V8" : "M0 4H8"} /></svg>
    </button>
  );
}

function StatusBar() {
  return (
    <div className="flex h-[21px] shrink-0 items-center bg-linear-to-b from-[#e3e6ea] to-[#b9bdc2] text-[11px] text-[#3c4148]">
      <span className="w-12 pl-2">Ready</span>
      <span className="h-[19px] w-px bg-[#80858c]" />
      <div className="ml-auto flex items-center">
        <span className="h-[19px] w-px bg-[#80858c]" />
        <button type="button" aria-label="Normal view" className="ml-1 flex h-[18px] w-[19px] items-center justify-center rounded-[2px] border border-[#c2942c] bg-[#ffe07a]">
          <svg width="13" height="11" fill="#fff" stroke="#5b6068"><path d="M0.500 0.500H12.500V10.500H0.500ZM4.500 0V11M8.500 0V11M0 3.500H13M0 7.500H13" /></svg>
        </button>
        <button type="button" aria-label="Page layout view" className="ml-[2px]">
          <svg width="15" height="13" fill="#b9bcc1" stroke="#5b6068"><path d="M0.500 0.500H13.500V11.500H0.500Z" /><path d="M3.500 1.500H10.500V10.500H3.500ZM5 4.500H9M5 6.500H9M5 8.500H9" fill="#f4f4f4" /></svg>
        </button>
        <button type="button" aria-label="Page break preview" className="ml-1">
          <svg width="15" height="13" fill="#b9bcc1" stroke="#5b6068"><path d="M0.500 0.500H13.500V11.500H0.500Z" /><path d="M1 0.500H5.500V6.500H0.500ZM5.500 0.500H9.500V6.500H5.500" fill="#f4f4f4" /></svg>
        </button>
        <button type="button" className="w-[47px] pl-[3px] text-center">100%</button>
        <ZoomButton />
        <input
          type="range"
          aria-label="Zoom"
          defaultValue={50}
          className="h-4 w-[99px] appearance-none bg-transparent bg-[linear-gradient(#7f858e,#7f858e)] bg-[length:100%_1px] bg-center bg-no-repeat [&::-webkit-slider-thumb]:h-3 [&::-webkit-slider-thumb]:w-[9px] [&::-webkit-slider-thumb]:appearance-none [&::-webkit-slider-thumb]:rounded-b-[4px] [&::-webkit-slider-thumb]:border [&::-webkit-slider-thumb]:border-[#6d747e] [&::-webkit-slider-thumb]:bg-[#f6f7f8]"
        />
        <ZoomButton plus />
        <span className="w-[5px]" />
      </div>
    </div>
  );
}

/* ---------- taskbar ---------- */

function TaskIcon({ label, className = "w-[49px]", children }: Kids & { label: string; className?: string }) {
  return (
    <button type="button" aria-label={label} className={`flex h-10 shrink-0 items-center justify-center ${className}`}>
      {children}
    </button>
  );
}

function Taskbar() {
  return (
    <footer className="flex h-10 shrink-0 items-center bg-linear-to-r from-[#1d2c3c] via-[#363d43] via-45% to-[#1c293a] text-white">
      <button type="button" aria-label="Start" className="flex h-10 w-12 items-center justify-center">
        <svg width="16" height="16" fill="#fff"><path d="M0 2.300L6.500 1.400V7.600H0ZM7.400 1.200L16 0V7.600H7.400ZM0 8.400H6.500V14.600L0 13.700ZM7.400 8.400H16V16L7.400 14.800Z" /></svg>
      </button>
      <label className="flex h-10 w-[288px] items-center border border-[#c4c4c4] bg-[#f2f2f2] pl-[11px]">
        <svg width="17" height="17" fill="none" stroke="#222" strokeWidth="1.400"><circle cx="10" cy="6" r="5.300" /><path d="M6.200 9.800L0.500 15.500" /></svg>
        <input aria-label="Search" placeholder="Type here to search" className="ml-[11px] min-w-0 flex-1 bg-transparent text-[14px] text-[#333] outline-none placeholder:text-[#333]" />
        <svg width="60" height="36" viewBox="0 0 60 36" className="mr-[6px] shrink-0" aria-hidden="true">
          <defs>
            <radialGradient id="heart" cx="0.350" cy="0.300" r="0.800">
              <stop offset="0" stopColor="#ff7a5c" /><stop offset="0.500" stopColor="#e03424" /><stop offset="1" stopColor="#b0101c" />
            </radialGradient>
          </defs>
          <path d="M40 30C30 23 25 16 27 9C29 2 38 1 42 8C47 2 56 4 58 10C60 19 50 26 40 30Z" fill="url(#heart)" />
          <path d="M8 3C2 2 1 7 3 13C5 19 9 23 13 24C17 22 19 14 17 7C16 4 14 3 11 4" fill="none" stroke="#8b9096" strokeWidth="2" />
          <path d="M3 13C5 19 9 23 13 24C17 22 17 16 17 12" fill="none" stroke="#2f8fd0" strokeWidth="1.500" />
          <path d="M13 24C15 32 23 36 31 32C37 28 38 22 40 17" fill="none" stroke="#2a80c6" strokeWidth="2.400" />
          <circle cx="40" cy="16" r="4.500" fill="#c9ced4" stroke="#5c6570" /><circle cx="40" cy="16" r="1.800" fill="#66717e" />
        </svg>
      </label>
      <TaskIcon label="Task view" className="w-[50px]">
        <svg width="17" height="16" fill="none" stroke="#fff"><path d="M1.500 0V2.500H10.500V0M1.500 16V13.500H10.500V16M0.500 5.500H11.500V10.500H0.500ZM15.500 0V4M15.500 9V16" strokeWidth="1.200" /><rect x="14" y="5" width="3" height="3" fill="#fff" stroke="none" /></svg>
      </TaskIcon>
      <TaskIcon label="File Explorer">
        <svg width="22" height="18" viewBox="0 0 22 18"><path d="M0 0H9L11 1.500H22V18H0Z" fill="#fed35f" /><path d="M0 0H9L11 1.500L9 3H0Z" fill="#e39c15" /><path d="M4 10H18V18H14V14.500H8V18H4Z" fill="#3b8fdb" /></svg>
      </TaskIcon>
      <TaskIcon label="Edge">
        <svg width="24" height="24" viewBox="0 0 24 24">
          <defs>
            <linearGradient id="edge-top"><stop offset="0" stopColor="#2aa8df" /><stop offset="0.600" stopColor="#36c5c7" /><stop offset="1" stopColor="#6cdf58" /></linearGradient>
            <linearGradient id="edge-low" x2="0" y2="1"><stop offset="0" stopColor="#1d92de" /><stop offset="1" stopColor="#0c59a4" /></linearGradient>
          </defs>
          <path d="M0 12C0 4 6 0 12 0C19 0 24 5 24 10C24 14 21 16 18 16C15 16 13.500 15 14 13.500C15.500 11 13 7 9 7C4 7 1 10 0 14Z" fill="url(#edge-top)" />
          <path d="M0 12C1 8.500 5 6.500 9 7C13 7.500 15 10 14 12C11 9.500 7 13 9.500 17C12 21 18 20.500 22 18C20 22 16 24 12 24C5 24 0 19 0 12Z" fill="url(#edge-low)" />
          <path d="M8 10C5 15 7 22 13 24C17 24 20 22 22 18C18 20.500 12 21 9.500 17C8 14.500 9 12 11 11Z" fill="#1260a9" />
        </svg>
      </TaskIcon>
      <TaskIcon label="Microsoft Store">
        <svg width="23" height="23" viewBox="0 0 23 23"><path d="M6 5V1.500H17V5" fill="none" stroke="#29a6e5" strokeWidth="2" /><path d="M0 5H23V19Q23 23 19 23H4Q0 23 0 19Z" fill="#f5f5f5" /><rect x="7" y="9" width="4" height="4" fill="#f25022" /><rect x="12" y="9" width="4" height="4" fill="#7fba00" /><rect x="7" y="14" width="4" height="4" fill="#00a4ef" /><rect x="12" y="14" width="4" height="4" fill="#ffb900" /></svg>
      </TaskIcon>
      <TaskIcon label="Mail">
        <svg width="24" height="22" viewBox="0 0 24 22"><path d="M0 7L12 0L24 7V10H0Z" fill="#1368b8" /><path d="M2 7H22L12 16Z" fill="#f4f4f4" /><path d="M0 7L24 22H0Z" fill="#2ab0ea" /><path d="M24 7L0 22H24Z" fill="#33c1f3" /><path d="M24 7V22L10.500 15.500Z" fill="#1b93dd" /></svg>
      </TaskIcon>
      <TaskIcon label="Opera">
        <svg width="23" height="23" viewBox="0 0 23 23"><defs><linearGradient id="opera"><stop offset="0" stopColor="#ff1b2d" /><stop offset="0.500" stopColor="#c40d20" /><stop offset="1" stopColor="#ff4d4d" /></linearGradient></defs><path fillRule="evenodd" d="M11.500 0A11.500 11.500 0 1 1 11.400 0ZM11.500 2.500C8 2.500 6.500 7 6.500 11.500S8 20.500 11.500 20.500S17 16 17 11.500S15 2.500 11.500 2.500Z" fill="url(#opera)" /></svg>
      </TaskIcon>
      <TaskIcon label="Diagrams">
        <svg width="24" height="24" viewBox="0 0 24 24"><circle cx="12" cy="12" r="12" fill="#f28b0c" /><path d="M12 8L7 15M12 8L17 15" stroke="#fff" strokeWidth="2" /><rect x="9" y="4" width="6" height="6" rx="1" fill="#fff" /><rect x="4" y="13" width="6" height="5" rx="1" fill="#fff" /><rect x="14" y="13" width="6" height="5" rx="1" fill="#fff" /></svg>
      </TaskIcon>
      <TaskIcon label="Skype" className="mx-1 w-10 border-b-2 border-[#76b9ed]">
        <svg width="24" height="24" viewBox="0 0 24 24"><circle cx="7" cy="7" r="6.500" fill="#0a9fe0" /><circle cx="16" cy="16" r="6.500" fill="#0a9fe0" /><circle cx="11.500" cy="11.500" r="10.500" fill="#12a7e8" /><text x="6.500" y="17" fontSize="16" fontWeight="bold" fill="#fff">S</text><circle cx="18" cy="18" r="5.500" fill="#fff" stroke="#7fba2a" /></svg>
      </TaskIcon>
      <TaskIcon label="Excel" className="w-[45px] border-b-2 border-[#76b9ed] bg-[#5c6368]">
        <svg width="23" height="23" viewBox="0 0 23 23"><rect x="0.500" y="0.500" width="21" height="20" rx="1" fill="#d8efd4" stroke="#3c8d46" /><path d="M10 1H21V9H10Z" fill="#8fcf86" /><path d="M3 4H7L9.500 8L12.500 4H16L11.500 10L16 17H12L9 12.500L5.500 17H2L7 10.300Z" fill="#207a30" /><path d="M11 12L22 9L20 20L9 21Z" fill="#f7faf5" stroke="#8ba88b" strokeWidth="0.600" /><path d="M12 14L20 12M12 16.500L19.500 14.500M11 19L19 17M15 12L13 20M18 11L17 19" stroke="#6ba36b" strokeWidth="0.600" /></svg>
      </TaskIcon>
      <span className="h-10 w-[3px] border-b-2 border-l border-b-[#76b9ed] border-l-[#33383d] bg-[#4a5157]" />

      <div className="ml-auto flex items-center">
        <button type="button" className="flex items-center text-[13px] whitespace-nowrap">
          <svg width="22" height="24" viewBox="0 0 22 24" className="mr-[9px]"><g fill="#f3950f" stroke="#b96408" strokeWidth="0.500"><rect x="1" y="12" width="19" height="4.500" rx="2" /><rect x="3" y="8" width="18.500" height="4.500" rx="2" /><rect x="2" y="4.500" width="17" height="4.500" rx="2" /><rect x="1" y="0.500" width="18" height="4.500" rx="2" /></g><path d="M6.500 23L11.500 18L16.500 23L14 23L11.500 21L9 23Z" fill="#6fbe2a" stroke="#6fbe2a" /></svg>
          USD/GBP
          <span className="ml-[10px] text-[#16c216]">+0.30%</span>
        </button>
        <button type="button" aria-label="Show hidden icons" className="ml-[27px] flex w-6 justify-start">
          <svg width="13" height="8" fill="none" stroke="#fff" strokeWidth="1.400"><path d="M1 7L6.500 1.500L12 7" /></svg>
        </button>
        <svg width="13" height="17" fill="none" stroke="#fff" className="mr-[11px]"><path d="M3 2.500Q6 0.500 9 2.500M3 14.500Q6 16.500 9 14.500M1.500 4.500H8.500V12.500H1.500ZM8.500 7L11.500 5.500V11.500L8.500 10" /></svg>
        <svg width="16" height="10" fill="none" stroke="#fff" className="mr-[9px]"><path d="M0.500 0.500H13.500V9.500H0.500ZM14 3.500H15.500V6.500H14" strokeWidth="1.200" /><rect x="2" y="2.500" width="3" height="5" fill="#fff" stroke="none" /></svg>
        <svg width="14" height="13" fill="none" stroke="#fff" className="mr-[7px]"><path d="M1 12C1 5.500 6 1 13 1" strokeOpacity="0.600" /><path d="M4 12C4 7.500 8 4 13 4M7 12C7 9.500 9.500 7 13 7" /><path d="M10 12C10 10.500 11.500 9.500 13 9.500V12Z" fill="#fff" /></svg>
        <svg width="17" height="14" fill="none" stroke="#fff" className="mr-[9px]"><path d="M0.500 4.500H3L6.500 1.500V12.500L3 9.500H0.500ZM9 5Q10.500 7 9 9M11 3Q14 7 11 11M13.500 1.500Q17.500 7 13.500 12.500" /></svg>
        <div className="flex w-[54px] flex-col items-center text-[11px] leading-[18px] whitespace-nowrap">
          <time>1:26 PM</time>
          <time>9/29/2024</time>
        </div>
        <button type="button" aria-label="Notifications" className="relative ml-[17px] h-7 w-[37px]">
          <svg width="17" height="17" className="mt-px"><path d="M0 0H16V12H11L8 15V12H0Z" fill="#fff" /><path d="M3 3.500H13M3 6H13M3 8.500H10" stroke="#1f2b3b" /></svg>
          <span className="absolute top-3 left-2 flex size-4 items-center justify-center rounded-full border border-[#7b8088] bg-[#2c2f33] text-[12px] leading-4">1</span>
        </button>
        <span className="mr-[3px] h-10 w-px bg-[#6a727c]" />
      </div>
    </footer>
  );
}

export default function App() {
  return (
    <div className="flex h-screen flex-col overflow-hidden bg-white font-['Open_Sans',sans-serif] text-[#3b3b3b]">
      <TitleBar />
      <RibbonTabs />
      <Ribbon />
      <div className="h-[3px] shrink-0 bg-[#d5d8df]" />
      <FormulaBar />
      <div className="h-[3px] shrink-0 border-b border-[#8e949e] bg-[#eceef4]" />
      <main className="flex min-h-0 flex-1">
        <Sheet />
        <VerticalScroll />
      </main>
      <SheetTabs />
      <StatusBar />
      <Taskbar />
    </div>
  );
}
